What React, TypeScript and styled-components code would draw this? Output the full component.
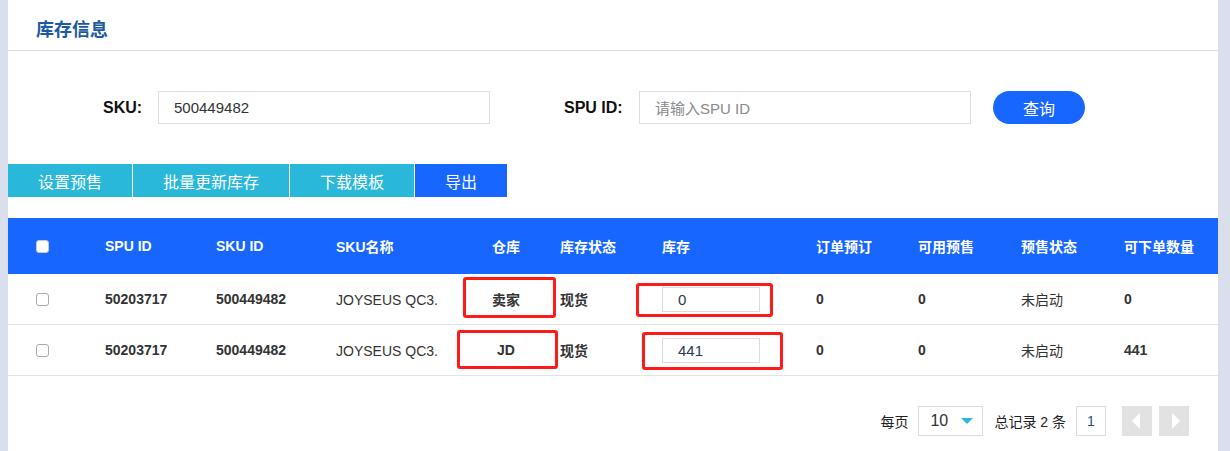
import React from "react";
import styled, { createGlobalStyle } from "styled-components";

const Global = createGlobalStyle`
  html, body { margin: 0; padding: 0; background: #d9dfec; }
  body { font-family: "Liberation Sans", Arial, "Noto Sans CJK SC", sans-serif; color: #333; }
  * { box-sizing: border-box; }
`;

const Page = styled.div`
  padding: 0 12px 0 8px;
  min-height: 451px;
`;

const Panel = styled.div`
  background: #fff;
  min-height: 451px;
`;

const TitleBar = styled.div`
  height: 51px;
  border-bottom: 1px solid #dcdcdc;
  display: flex;
  align-items: center;
  padding-left: 28px;
  padding-top: 6px;
`;

const Title = styled.h2`
  margin: 0;
  font-size: 18px;
  font-weight: bold;
  color: #1d5aa3;
`;

const SearchRow = styled.div`
  display: flex;
  align-items: center;
  padding: 40px 0 0 0;
  height: 73px;
`;

const Field = styled.div<{ $labelWidth: number; $ml: number }>`
  display: flex;
  align-items: center;
  margin-left: ${(p) => p.$ml}px;
  label {
    font-size: 16px;
    font-weight: bold;
    color: #111;
    width: ${(p) => p.$labelWidth}px;
  }
`;

const TextInput = styled.div<{ $placeholder?: boolean }>`
  width: 332px;
  height: 33px;
  border: 1px solid #dedede;
  display: flex;
  align-items: center;
  padding-left: 15px;
  font-size: 15px;
  color: ${(p) => (p.$placeholder ? "#8a8a8a" : "#333")};
`;

const QueryButton = styled.button`
  margin-left: 22px;
  width: 92px;
  height: 33px;
  border: none;
  border-radius: 17px;
  background: #1766ff;
  color: #fff;
  font-size: 16px;
  font-family: inherit;
`;

const Toolbar = styled.div`
  display: flex;
  gap: 1px;
  margin-top: 40px;
`;

const ToolButton = styled.button<{ $primary?: boolean }>`
  height: 33px;
  padding: 0 30px;
  border: none;
  background: ${(p) => (p.$primary ? "#1766ff" : "#29b7da")};
  color: #fff;
  font-size: 16px;
  font-family: inherit;
  white-space: nowrap;
`;

const cols = "97px 111px 120px 116px 108px 102px 154px 102px 103px 103px 1fr";

const Table = styled.div`
  margin-top: 21px;
`;

const HeadRow = styled.div`
  display: grid;
  grid-template-columns: ${cols};
  height: 56px;
  background: #1766ff;
  align-items: center;
`;

const HeadCell = styled.div<{ $center?: boolean }>`
  color: #fff;
  font-size: 14px;
  font-weight: bold;
  text-align: ${(p) => (p.$center ? "center" : "left")};
`;

const Body = styled.div`
  position: relative;
`;

const Row = styled.div`
  display: grid;
  grid-template-columns: ${cols};
  height: 51px;
  border-bottom: 1px solid #e3e3e3;
  align-items: center;
`;

const Cell = styled.div<{ $center?: boolean; $light?: boolean }>`
  font-size: 14px;
  font-weight: ${(p) => (p.$light ? "normal" : "bold")};
  color: #333;
  text-align: ${(p) => (p.$center ? "center" : "left")};
  white-space: nowrap;
  overflow: hidden;
`;

const NameCell = styled.div`
  font-size: 14px;
  color: #333;
  white-space: nowrap;
  overflow: hidden;
  width: 101px;
`;

const CheckCell = styled.div`
  padding-left: 28px;
  display: flex;
  align-items: center;
`;

const Check = styled.span<{ $head?: boolean }>`
  width: 13px;
  height: 13px;
  border-radius: 3px;
  background: #fff;
  border: 1px solid ${(p) => (p.$head ? "#c9c9c9" : "#aaa")};
  display: block;
`;

const StockInput = styled.div`
  width: 98px;
  height: 25px;
  border: 1px solid #dcdcdc;
  font-size: 15px;
  color: #2b3a55;
  display: flex;
  align-items: center;
  padding-left: 15px;
`;

const Mark = styled.div`
  position: absolute;
  border: 3px solid #ff1a1a;
  border-radius: 3px;
  pointer-events: none;
`;

const Pager = styled.div`
  display: flex;
  justify-content: flex-end;
  align-items: center;
  padding: 30px 29px 0 0;
  font-size: 14px;
  color: #333;
`;

const PagerText = styled.span`
  margin-right: 10px;
  font-size: 14px;
  color: #222;
`;

const SizeSelect = styled.div`
  width: 65px;
  height: 30px;
  border: 1px solid #dcdcdc;
  display: flex;
  align-items: center;
  justify-content: space-between;
  padding: 0 9px 0 11px;
  font-size: 16px;
  color: #333;
  margin-right: 11px;
`;

const Caret = styled.span`
  width: 0;
  height: 0;
  border-left: 6px solid transparent;
  border-right: 6px solid transparent;
  border-top: 6px solid #29b7da;
`;

const PageNum = styled.div`
  width: 30px;
  height: 30px;
  border: 1px solid #dcdcdc;
  display: flex;
  align-items: center;
  justify-content: center;
  font-size: 14px;
  color: #1d4e96;
  margin-right: 16px;
`;

const ArrowBtn = styled.div`
  width: 30px;
  height: 30px;
  background: #e2e2e2;
  display: flex;
  align-items: center;
  justify-content: center;
  & + & {
    margin-left: 7px;
  }
`;

const Tri = styled.span<{ $dir: "left" | "right" }>`
  width: 0;
  height: 0;
  border-top: 8px solid transparent;
  border-bottom: 8px solid transparent;
  ${(p) =>
    p.$dir === "left"
      ? "border-right: 8px solid #fff; margin-right: 3px;"
      : "border-left: 8px solid #fff; margin-left: 3px;"}
`;

const rows = [
  { spu: "50203717", sku: "500449482", name: "JOYSEUS QC3.0 快充数据线", wh: "卖家", state: "现货", stock: "0", order: "0", avail: "0", pre: "未启动", can: "0" },
  { spu: "50203717", sku: "500449482", name: "JOYSEUS QC3.0 快充数据线", wh: "JD", state: "现货", stock: "441", order: "0", avail: "0", pre: "未启动", can: "441" },
];

const marks = [
  { left: 455, top: 3, width: 93, height: 41 },
  { left: 449, top: 56, width: 101, height: 39 },
  { left: 628, top: 9, width: 137, height: 34 },
  { left: 634, top: 58, width: 141, height: 38 },
];

export default function App() {
  return (
    <>
      <Global />
      <Page>
        <Panel>
          <TitleBar>
            <Title>库存信息</Title>
          </TitleBar>
          <SearchRow>
            <Field $labelWidth={55} $ml={95}>
              <label>SKU:</label>
              <TextInput>500449482</TextInput>
            </Field>
            <Field $labelWidth={75} $ml={74}>
              <label>SPU ID:</label>
              <TextInput $placeholder>请输入SPU ID</TextInput>
            </Field>
            <QueryButton>查询</QueryButton>
          </SearchRow>
          <Toolbar>
            <ToolButton>设置预售</ToolButton>
            <ToolButton>批量更新库存</ToolButton>
            <ToolButton>下载模板</ToolButton>
            <ToolButton $primary>导出</ToolButton>
          </Toolbar>
          <Table>
            <HeadRow>
              <CheckCell>
                <Check $head />
              </CheckCell>
              <HeadCell>SPU ID</HeadCell>
              <HeadCell>SKU ID</HeadCell>
              <HeadCell>SKU名称</HeadCell>
              <HeadCell $center>仓库</HeadCell>
              <HeadCell>库存状态</HeadCell>
              <HeadCell>库存</HeadCell>
              <HeadCell>订单预订</HeadCell>
              <HeadCell>可用预售</HeadCell>
              <HeadCell>预售状态</HeadCell>
              <HeadCell>可下单数量</HeadCell>
            </HeadRow>
            <Body>
              {rows.map((r, i) => (
                <Row key={i}>
                  <CheckCell>
                    <Check />
                  </CheckCell>
                  <Cell>{r.spu}</Cell>
                  <Cell>{r.sku}</Cell>
                  <NameCell>{r.name}</NameCell>
                  <Cell $center>{r.wh}</Cell>
                  <Cell>{r.state}</Cell>
                  <div>
                    <StockInput>{r.stock}</StockInput>
                  </div>
                  <Cell>{r.order}</Cell>
                  <Cell>{r.avail}</Cell>
                  <Cell $light>{r.pre}</Cell>
                  <Cell>{r.can}</Cell>
                </Row>
              ))}
              {marks.map((m, i) => (
                <Mark key={i} style={{ left: m.left, top: m.top, width: m.width, height: m.height }} />
              ))}
            </Body>
          </Table>
          <Pager>
            <PagerText>每页</PagerText>
            <SizeSelect>
              10
              <Caret />
            </SizeSelect>
            <PagerText>总记录 2 条</PagerText>
            <PageNum>1</PageNum>
            <ArrowBtn>
              <Tri $dir="left" />
            </ArrowBtn>
            <ArrowBtn>
              <Tri $dir="right" />
            </ArrowBtn>
          </Pager>
        </Panel>
      </Page>
    </>
  );
}
